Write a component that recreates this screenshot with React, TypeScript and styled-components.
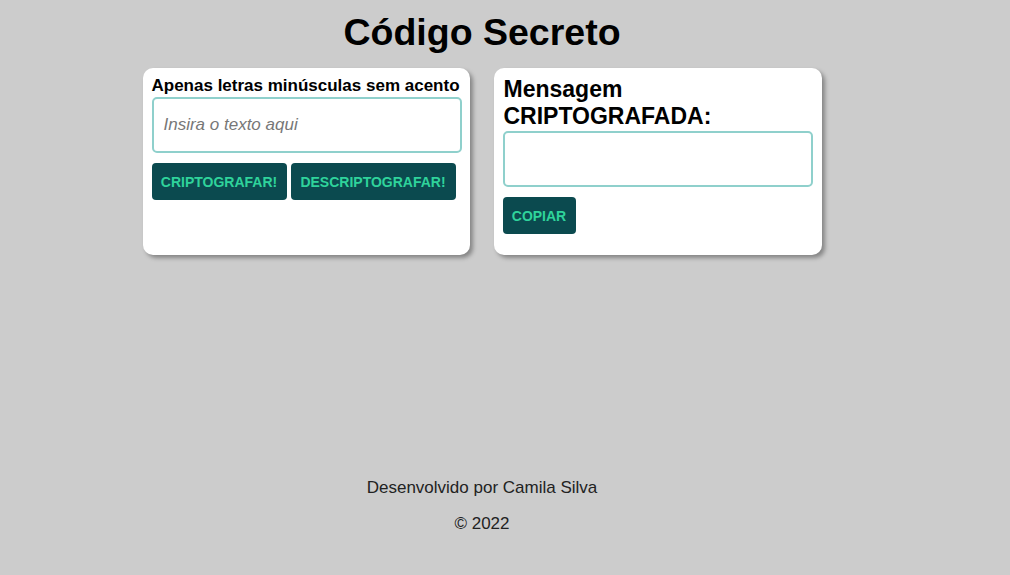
import React from "react";
import styled, { createGlobalStyle } from "styled-components";

const Global = createGlobalStyle`
  html, body { margin: 0; padding: 0; background: #cccccc; }
  body { font-family: "Liberation Sans", Arial, sans-serif; color: #000; }
`;

const Page = styled.div`
  width: 964px;
  height: 575px;
  display: flex;
  flex-direction: column;
  align-items: center;
`;

const Title = styled.h1`
  margin: 10px 0 0;
  font-size: 37.5px;
  line-height: 44px;
  font-weight: bold;
  color: #000;
`;

const Cards = styled.div`
  display: flex;
  gap: 24px;
  margin-top: 14px;
`;

const Card = styled.section<{ $w: number }>`
  box-sizing: border-box;
  width: ${(p) => p.$w}px;
  height: 187px;
  background: #fff;
  border-radius: 10px;
  box-shadow: 3px 3px 4px rgba(0, 0, 0, 0.35);
  padding: 8px 9px;
  display: flex;
  flex-direction: column;
  align-items: flex-start;
`;

const Label = styled.label`
  font-size: 17px;
  font-weight: bold;
  line-height: 19px;
  margin-bottom: 2px;
`;

const Heading = styled.h2`
  margin: 0 0 1px 1px;
  font-size: 23px;
  line-height: 27px;
  font-weight: bold;
`;

const TextBox = styled.textarea`
  box-sizing: border-box;
  width: 310px;
  height: 56px;
  border: 2px solid #8fd0cc;
  border-radius: 5px;
  padding: 17px 10px;
  resize: none;
  font-family: "Liberation Sans", Arial, sans-serif;
  font-size: 17px;
  line-height: 18px;
  outline: none;
  &::placeholder { color: #777; font-style: italic; }
`;

const Buttons = styled.div`
  display: flex;
  gap: 4px;
  margin-top: 10px;
`;

const Button = styled.button<{ $w: number }>`
  box-sizing: border-box;
  width: ${(p) => p.$w}px;
  height: 37px;
  border: none;
  border-radius: 4px;
  background: #0b4a4f;
  color: #2fd39b;
  font-family: "Liberation Sans", Arial, sans-serif;
  font-weight: bold;
  font-size: 14px;
  padding: 0;
  cursor: pointer;
`;

const Footer = styled.footer`
  margin-top: auto;
  margin-bottom: 42px;
  display: flex;
  flex-direction: column;
  align-items: center;
  gap: 17px;
  font-size: 17px;
  line-height: 19px;
  color: #222;
`;

export default function App() {
  return (
    <Page>
      <Global />
      <Title>Código Secreto</Title>
      <Cards>
        <Card $w={327}>
          <Label>Apenas letras minúsculas sem acento</Label>
          <TextBox placeholder="Insira o texto aqui" />
          <Buttons>
            <Button $w={135}>CRIPTOGRAFAR!</Button>
            <Button $w={165}>DESCRIPTOGRAFAR!</Button>
          </Buttons>
        </Card>
        <Card $w={328}>
          <Heading>
            Mensagem
            <br />
            CRIPTOGRAFADA:
          </Heading>
          <TextBox readOnly />
          <Buttons>
            <Button $w={73}>COPIAR</Button>
          </Buttons>
        </Card>
      </Cards>
      <Footer>
        <span>Desenvolvido por Camila Silva</span>
        <span>© 2022</span>
      </Footer>
    </Page>
  );
}
